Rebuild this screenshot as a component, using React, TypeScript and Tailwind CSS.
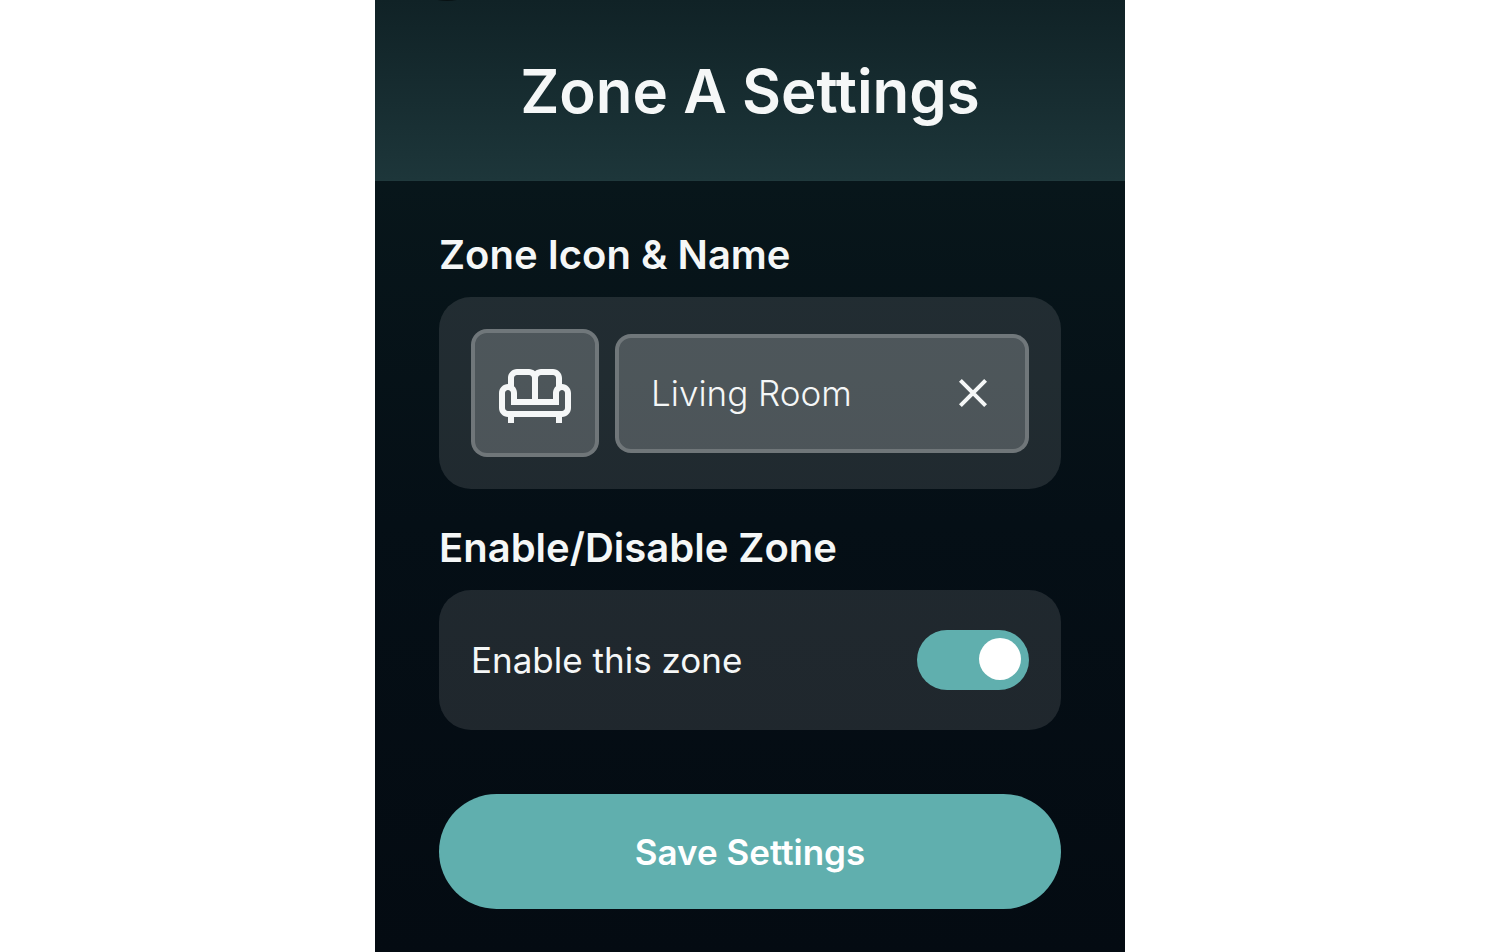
import { useState } from 'react';

function SofaIcon() {
  return (
    <svg className="size-[72px]" viewBox="0 0 24 24" fill="currentColor" aria-hidden="true">
      <path d="M21 9V7C21 5.35 19.65 4 18 4H14C13.23 4 12.53 4.3 12 4.78C11.47 4.3 10.77 4 10 4H6C4.35 4 3 5.35 3 7V9C1.35 9 0 10.35 0 12V17C0 18.65 1.35 20 3 20V22H5V20H19V22H21V20C22.65 20 24 18.65 24 17V12C24 10.35 22.65 9 21 9M14 6H18C18.55 6 19 6.45 19 7V9.78C18.39 10.33 18 11.12 18 12V14H13V7C13 6.45 13.45 6 14 6M5 7C5 6.45 5.45 6 6 6H10C10.55 6 11 6.45 11 7V14H6V12C6 11.12 5.61 10.33 5 9.78V7M22 17C22 17.55 21.55 18 21 18H3C2.45 18 2 17.55 2 17V12C2 11.45 2.45 11 3 11C3.55 11 4 11.45 4 12V16H20V12C20 11.45 20.45 11 21 11C21.55 11 22 11.45 22 12V17Z" />
    </svg>
  );
}

function CloseIcon() {
  return (
    <svg className="size-12" viewBox="0 0 24 24" fill="none" stroke="currentColor" strokeWidth={2} aria-hidden="true">
      <path d="M5.7 5.7L18.3 18.3M18.3 5.7L5.7 18.3" />
    </svg>
  );
}

export default function App() {
  const [name, setName] = useState('Living Room');
  const [enabled, setEnabled] = useState(true);

  return (
    <div className="min-h-screen bg-white font-['Inter',sans-serif] text-[#f5f7f7]">
      <div className="mx-auto min-h-screen w-1/2 min-w-[640px] bg-linear-to-b from-[#0a1a1d] via-[#050f16] via-55% to-[#040b12]">
        <header className="relative overflow-hidden border-b border-[#20393c] bg-linear-to-b from-[#102226] to-[#1d363a] pt-[51px] pb-[49px]">
          {/* bottom of the round back button, scrolled out of view */}
          <span className="absolute -top-[95px] left-6 size-24 rounded-full bg-black/50" />
          <h1 className="text-center text-[60px] leading-[80px] font-semibold">Zone A Settings</h1>
        </header>

        <main className="px-16 pt-[50px] pb-10">
          <form onSubmit={(e) => e.preventDefault()}>
            <h2 className="text-[40px] leading-12 font-semibold">
              <label htmlFor="zone-name">Zone Icon &amp; Name</label>
            </h2>
            <div className="mt-[18px] flex items-center gap-4 rounded-[32px] bg-white/11 p-8">
              <button
                type="button"
                aria-label="Choose zone icon"
                className="flex size-32 shrink-0 items-center justify-center rounded-2xl border-4 border-white/20 bg-white/20"
              >
                <SofaIcon />
              </button>
              <div className="flex h-[119px] min-w-0 flex-1 items-center rounded-2xl border-4 border-white/20 bg-white/20 pr-7 pl-8">
                <input
                  id="zone-name"
                  type="text"
                  value={name}
                  onChange={(e) => setName(e.target.value)}
                  className="min-w-0 flex-1 bg-transparent text-[35px] leading-12 font-light outline-none"
                />
                <button type="button" aria-label="Clear name" onClick={() => setName('')} className="shrink-0">
                  <CloseIcon />
                </button>
              </div>
            </div>

            <h2 className="mt-[35px] text-[40px] leading-12 font-semibold">Enable/Disable Zone</h2>
            <div className="mt-[18px] flex items-center justify-between rounded-[32px] bg-white/11 px-8 py-10">
              <label htmlFor="zone-enabled" className="text-[35px] leading-12">
                Enable this zone
              </label>
              <input
                id="zone-enabled"
                type="checkbox"
                role="switch"
                checked={enabled}
                onChange={(e) => setEnabled(e.target.checked)}
                className="flex h-[60px] w-28 shrink-0 appearance-none rounded-full bg-white/20 p-2 before:size-[42px] before:rounded-full before:bg-white checked:justify-end checked:bg-[#60afae]"
              />
            </div>

            <button
              type="submit"
              className="mt-16 h-[115px] w-full rounded-full bg-[#60afae] text-[35px] leading-12 font-semibold text-white"
            >
              Save Settings
            </button>
          </form>
        </main>
      </div>
    </div>
  );
}
